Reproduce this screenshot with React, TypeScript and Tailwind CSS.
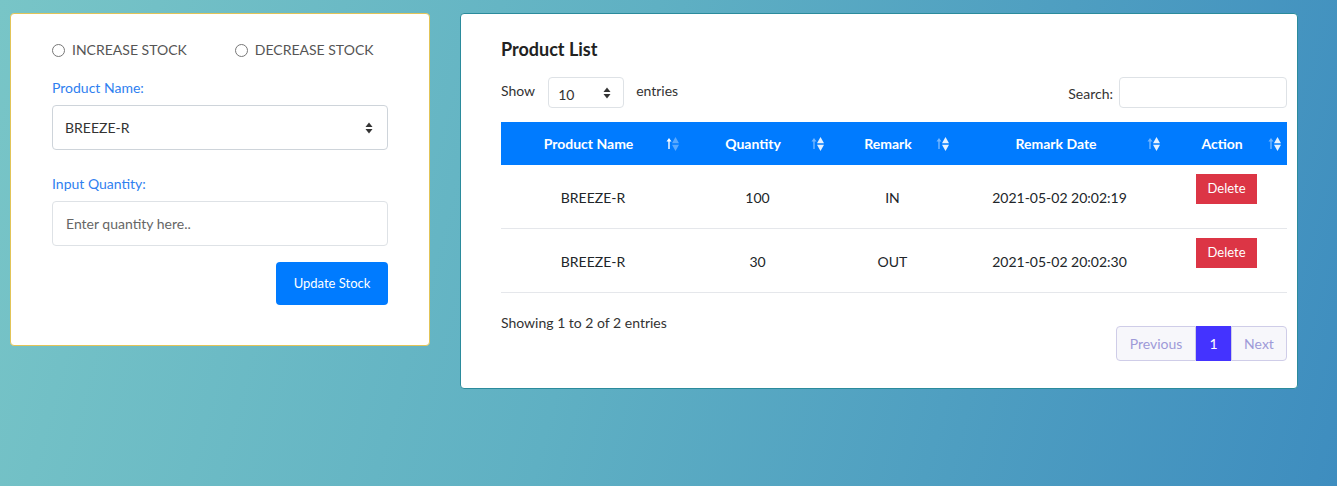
import React from "react";

function SortIcon({ active }: { active?: boolean }) {
  return (
    <svg width="13" height="18" viewBox="0 0 13 18" className="shrink-0">
      <path d="M3 3 L0.5 6.5 H2.3 V14 H3.7 V6.5 H5.5 Z" fill="#ffffff" opacity={active ? 1 : 0.45} />
      <path d="M9.5 2 L6 8.3 H13 Z" fill="#ffffff" opacity={active ? 0.35 : 0.9} />
      <path d="M9.5 16 L6 9.7 H13 Z" fill="#ffffff" opacity={active ? 0.35 : 0.9} />
    </svg>
  );
}

function Updown() {
  return (
    <svg width="8" height="12" viewBox="0 0 8 12">
      <path d="M4 0.5 L7.5 5 H0.5 Z" fill="#333" />
      <path d="M4 11.5 L7.5 7 H0.5 Z" fill="#333" />
    </svg>
  );
}

const rows = [
  { name: "BREEZE-R", qty: "100", remark: "IN", date: "2021-05-02 20:02:19" },
  { name: "BREEZE-R", qty: "30", remark: "OUT", date: "2021-05-02 20:02:30" },
];

const cols = [
  { label: "Product Name", w: "w-[184px]", active: true },
  { label: "Quantity", w: "w-[145px]" },
  { label: "Remark", w: "w-[125px]" },
  { label: "Remark Date", w: "w-[211px]" },
  { label: "Action", w: "w-[121px]" },
];

export default function App() {
  return (
    <div
      className="min-h-[486px] w-full bg-[linear-gradient(105deg,#78c5c7_0%,#5fb0c3_45%,#3e8dbf_100%)] text-[#212529]"
      style={{ fontFamily: "Lato, 'Open Sans', sans-serif" }}
    >
      <div className="flex items-start gap-[30px] pl-[10px] pt-[13px]">
        {/* stock form */}
        <div className="flex w-[420px] flex-col rounded-[4px] border border-[#e2c458] bg-white px-[41px] pb-[40px] pt-[26px]">
          <div className="flex items-center whitespace-nowrap text-[14px] leading-[20px] text-[#555]">
            <label className="flex items-center gap-[7px]">
              <span className="h-[13px] w-[13px] rounded-full border border-[#777] bg-white" />
              INCREASE STOCK
            </label>
            <label className="ml-[48px] flex items-center gap-[7px]">
              <span className="h-[13px] w-[13px] rounded-full border border-[#777] bg-white" />
              DECREASE STOCK
            </label>
          </div>
          <div className="mt-[18px] text-[14px] leading-[20px] text-[#2f7ff0]">Product Name:</div>
          <div className="mt-[7px] flex h-[45px] items-center justify-between rounded-[4px] border border-[#ced4da] pl-[12px] pr-[14px] text-[14px] text-[#333]">
            <span>BREEZE-R</span>
            <Updown />
          </div>
          <div className="mt-[24px] text-[14px] leading-[20px] text-[#2f7ff0]">Input Quantity:</div>
          <div className="mt-[7px] flex h-[45px] items-center rounded-[4px] border border-[#dee2e6] pl-[13px] text-[14px] text-[#666]">
            Enter quantity here..
          </div>
          <div className="mt-[16px] flex justify-end">
            <button className="h-[43px] w-[112px] rounded-[4px] bg-[#007bff] text-[13px] text-white">
              Update Stock
            </button>
          </div>
        </div>

        {/* product list */}
        <div className="w-[838px] rounded-[4px] border border-[#2b8b9c] bg-white pb-[27px] pl-[40px] pr-[10px] pt-[23px]">
          <h2 className="text-[18px] font-bold leading-[24px] text-[#222]">Product List</h2>
          <div className="mt-[16px] flex items-start justify-between text-[14px] text-[#333]">
            <div className="flex items-center">
              <span className="mt-[-4px]">Show</span>
              <div className="ml-[13px] flex h-[31px] w-[76px] items-center justify-between rounded-[4px] border border-[#dee2e6] pl-[9px] pr-[12px]">
                <span className="mt-[3px]">10</span>
                <Updown />
              </div>
              <span className="ml-[12px] mt-[-4px]">entries</span>
            </div>
            <div className="flex items-center">
              <span className="mt-[2px] text-[14px]">Search:</span>
              <div className="ml-[6px] h-[31px] w-[168px] rounded-[4px] border border-[#dee2e6]" />
            </div>
          </div>

          <div className="mt-[14px]">
            <div className="flex h-[43px] items-center bg-[#007bff] text-[14px] font-bold text-white">
              {cols.map((c) => (
                <div key={c.label} className={`${c.w} flex shrink-0 items-center pr-[6px]`}>
                  <span className="flex-1 pl-[10px] text-center">{c.label}</span>
                  <SortIcon active={c.active} />
                </div>
              ))}
            </div>
            {rows.map((r) => (
              <div key={r.date} className="flex h-[64px] border-b border-[#e5e7eb] text-[14px]">
                <div className="flex w-[184px] shrink-0 items-center justify-center pt-[2px]">{r.name}</div>
                <div className="flex w-[145px] shrink-0 items-center justify-center pt-[2px]">{r.qty}</div>
                <div className="flex w-[125px] shrink-0 items-center justify-center pt-[2px]">{r.remark}</div>
                <div className="flex w-[211px] shrink-0 items-center justify-center pr-[2px] pt-[2px]">{r.date}</div>
                <div className="flex w-[121px] shrink-0 justify-center pt-[9px]">
                  <button className="h-[30px] w-[61px] bg-[#dc3545] text-[13px] text-white">Delete</button>
                </div>
              </div>
            ))}
          </div>

          <div className="mt-[19px] flex items-start justify-between">
            <div className="text-[14px] text-[#333]">Showing 1 to 2 of 2 entries</div>
            <div className="mt-[14px] flex h-[35px] text-[14px]">
              <div className="flex w-[80px] items-center justify-center rounded-l-[4px] border border-[#cfcde8] bg-[#f7f7fb] text-[#9e9ad8]">
                Previous
              </div>
              <div className="flex w-[35px] items-center justify-center bg-[#4433ff] text-white">1</div>
              <div className="flex w-[56px] items-center justify-center rounded-r-[4px] border border-[#cfcde8] bg-[#f7f7fb] text-[#9e9ad8]">
                Next
              </div>
            </div>
          </div>
        </div>
      </div>
    </div>
  );
}
